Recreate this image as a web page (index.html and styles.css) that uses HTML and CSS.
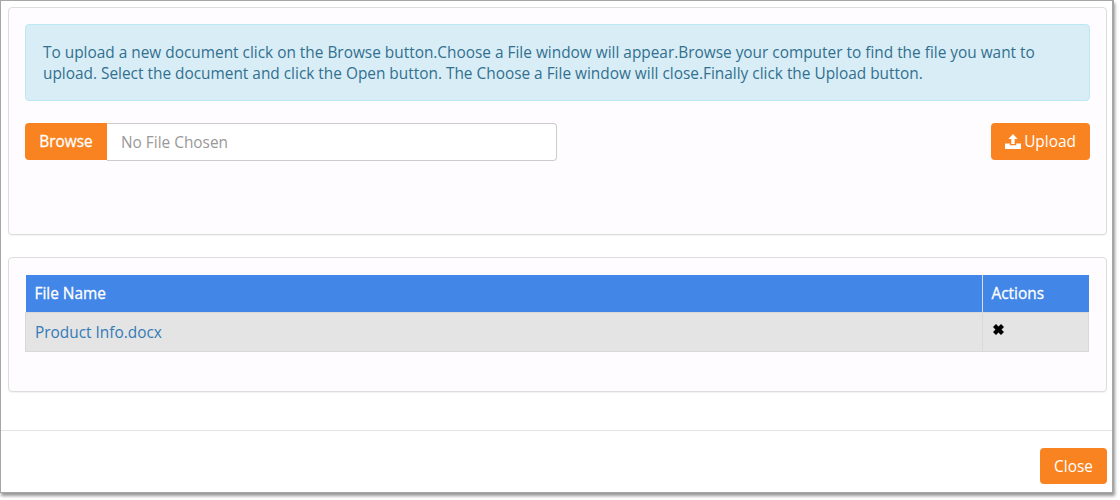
FILE: index.html
```html
<!DOCTYPE html>
<html lang="en">

<head>
    <meta charset="UTF-8">
    <title>Documents</title>
    <link rel="stylesheet" href="styles.css">
</head>

<body>
    <div class="modal">
        <div class="modal__body">
            <!-- upload -->
            <div class="panel panel--upload">
                <div class="alert">
                    To upload a new document click on the Browse button.Choose a File window will appear.Browse your computer to find the file you want to upload. Select the document and click the Open button. The Choose a File window will close.Finally click the Upload button.
                </div>
                <div class="upload-row">
                    <div class="file-input">
                        <span class="file-input__btn">Browse</span>
                        <span class="file-input__name">No File Chosen</span>
                    </div>
                    <button class="btn btn--upload" type="button">
                        <svg class="btn__icon" width="16" height="15" viewBox="0 0 16 15">
                            <path fill="#fff" d="M8 0l4.600 5H9.700v5H6.300V5H3.400zM0 9.500h4.800v1.700h6.400V9.500H16V15H0z"/>
                        </svg>
                        Upload
                    </button>
                </div>
            </div>

            <!-- list -->
            <div class="panel panel--files">
                <table class="files">
                    <thead>
                        <tr>
                            <th class="files__name">File Name</th>
                            <th class="files__actions">Actions</th>
                        </tr>
                    </thead>
                    <tbody>
                        <tr>
                            <td><a class="files__link" href="#">Product Info.docx</a></td>
                            <td>
                                <svg class="files__remove" width="11" height="11" viewBox="0 0 11 11">
                                    <path d="M3 0l2.500 2.500L8 0l3 3-2.500 2.500L11 8l-3 3-2.500-2.500L3 11 0 8l2.500-2.500L0 3z"/>
                                </svg>
                            </td>
                        </tr>
                    </tbody>
                </table>
            </div>
        </div>
        <div class="modal__footer">
            <button class="btn" type="button">Close</button>
        </div>
    </div>
</body>

</html>
```

FILE: styles.css
```css
html,
body {
    margin: 0;
    height: 100%;
    background: #fff;
}

body {
    font-family: "Open Sans", sans-serif;
    font-size: 15.4px;
    line-height: 21px;
    overflow: hidden;
}

/* modal */
.modal {
    box-sizing: border-box;
    width: 1114px;
    height: 493px;
    background: #fff;
    border: 1px solid #a6a6a6;
    border-right-width: 2px;
    box-shadow: 1px 3px 3px #999;
}

.modal__body {
    height: 430px;
    box-sizing: border-box;
    padding: 6px 5px 0 7px;
    border-bottom: 1px solid #e5e5e5;
}

.modal__footer {
    display: flex;
    justify-content: flex-end;
    padding: 17px 5px 0 0;
}

/* panel */
.panel {
    box-sizing: border-box;
    padding: 16px;
    background: #fefcff;
    border: 1px solid #ddd;
    border-radius: 4px;
    box-shadow: 0 1px 1px rgba(0, 0, 0, .05);
}

.panel--upload {
    height: 228px;
}

.panel--files {
    height: 135px;
    margin-top: 22px;
}

/* alert */
.alert {
    box-sizing: border-box;
    height: 77px;
    padding: 17px 17px;
    color: #31708f;
    background: #d9edf7;
    border: 1px solid #bce8f1;
    border-radius: 4px;
}

/* upload row */
.upload-row {
    display: flex;
    justify-content: space-between;
    margin-top: 22px;
}

.file-input {
    display: flex;
    width: 532px;
    height: 38px;
}

.file-input__btn {
    display: flex;
    align-items: center;
    justify-content: center;
    width: 82px;
    height: 37px;
    color: #fff;
    -webkit-text-stroke: .3px #fff;
    background: #f98320;
    border-radius: 4px 0 0 4px;
}

.file-input__name {
    flex: 1;
    padding: 0 14px;
    line-height: 37px;
    color: #999;
    background: #fff;
    border: 1px solid #ccc;
    border-left: 0;
    border-radius: 0 4px 4px 0;
}

/* buttons */
.btn {
    width: 67px;
    height: 36px;
    padding: 0;
    font-family: inherit;
    font-size: 15.4px;
    color: #fff;
    background: #f98320;
    border: 0;
    border-radius: 4px;
}

.btn--upload {
    display: flex;
    align-items: center;
    justify-content: center;
    width: 99px;
    height: 37px;
}

.btn__icon {
    margin-right: 3px;
}

/* file table */
.files {
    width: 1064px;
    margin-top: 1px;
    border-collapse: collapse;
}

.files th {
    height: 37px;
    padding: 0 9px;
    font-weight: 400;
    text-align: left;
    color: #fff;
    -webkit-text-stroke: .3px #fff;
    background: #4286e8;
    border-right: 1px solid #ddd;
}

.files th:last-child {
    border-right: 0;
}

.files td {
    height: 38px;
    padding: 0 9px;
    background: #e4e4e4;
    border: 1px solid #d9d9d9;
}

.files__actions {
    width: 88px;
}

.files__link {
    color: #337ab7;
    text-decoration: none;
}

.files__remove {
    display: block;
    margin: -5px 0 0 1px;
}
```
